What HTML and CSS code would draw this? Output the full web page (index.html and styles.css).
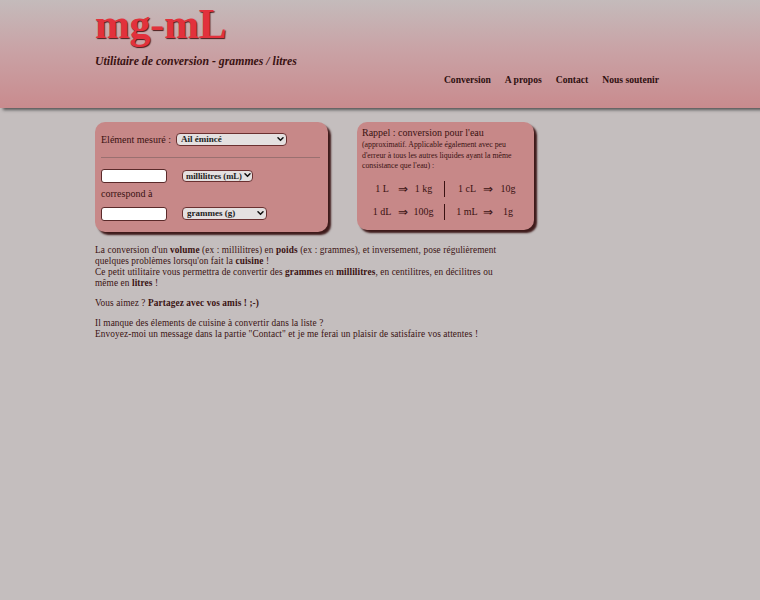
FILE: index.html
```html
<!DOCTYPE html>
<html lang="fr">
<head>
<meta charset="utf-8">
<title>mg-mL</title>
<link rel="stylesheet" href="styles.css">
</head>
<body>
<header class="header">
  <div class="header-inner">
    <h1 class="logo">mg-mL</h1>
    <div class="tagline">Utilitaire de conversion - grammes / litres</div>
    <nav class="nav">
      <a href="#">Conversion</a>
      <a href="#">A propos</a>
      <a href="#">Contact</a>
      <a href="#">Nous soutenir</a>
    </nav>
  </div>
</header>
<main class="content">
  <div class="boxes">
    <div class="box box-form">
      <div class="row-elem">
        <span class="label label-elem">Elément mesuré :</span>
        <span class="selwrap sel-elem">
          <select class="sel"><option>Ail émincé</option></select>
          <svg class="chev" viewBox="0 0 8 6" width="7" height="5"><path d="M1 1 L4 4 L7 1" fill="none" stroke="#111" stroke-width="1.8" stroke-linecap="round" stroke-linejoin="round"/></svg>
        </span>
      </div>
      <div class="rule"></div>
      <div class="row-io">
        <input class="num" type="text">
        <span class="selwrap sel-ml">
          <select class="sel"><option>millilitres (mL)</option></select>
          <svg class="chev" viewBox="0 0 8 6" width="7" height="5"><path d="M1 1 L4 4 L7 1" fill="none" stroke="#111" stroke-width="1.8" stroke-linecap="round" stroke-linejoin="round"/></svg>
        </span>
      </div>
      <div class="label corr">correspond à</div>
      <div class="row-io">
        <input class="num" type="text">
        <span class="selwrap sel-g">
          <select class="sel"><option>grammes (g)</option></select>
          <svg class="chev" viewBox="0 0 8 6" width="7" height="5"><path d="M1 1 L4 4 L7 1" fill="none" stroke="#111" stroke-width="1.8" stroke-linecap="round" stroke-linejoin="round"/></svg>
        </span>
      </div>
    </div>
    <div class="box box-info">
      <div class="info-title">Rappel : conversion pour l'eau</div>
      <div class="info-note">(approximatif. Applicable également avec peu d'erreur à tous les autres liquides ayant la même consistance que l'eau) :</div>
      <div class="eq">
        <span>1 L</span><span class="arr">&rArr;</span><span>1 kg</span><span class="div"></span><span>1 cL</span><span class="arr">&rArr;</span><span>10g</span>
        <span>1 dL</span><span class="arr">&rArr;</span><span>100g</span><span class="div"></span><span>1 mL</span><span class="arr">&rArr;</span><span>1g</span>
      </div>
    </div>
  </div>
  <div class="text">
    <p>La conversion d'un <b>volume</b> (ex : millilitres) en <b>poids</b> (ex : grammes), et inversement, pose régulièrement quelques problèmes lorsqu'on fait la <b>cuisine</b> !<br>Ce petit utilitaire vous permettra de convertir des <b>grammes</b> en <b>millilitres</b>, en centilitres, en décilitres ou même en <b>litres</b> !</p>
    <p>Vous aimez ? <b>Partagez avec vos amis ! ;-)</b></p>
    <p>Il manque des élements de cuisine à convertir dans la liste ?<br>Envoyez-moi un message dans la partie "Contact" et je me ferai un plaisir de satisfaire vos attentes !</p>
  </div>
</main>
</body>
</html>
```
FILE: styles.css
```css
html, body {
  margin: 0;
  padding: 0;
}
body {
  background: #c4bebe;
  font-family: "Liberation Serif", "Times New Roman", serif;
  color: #3a1212;
  font-size: 9.6px;
}
.header {
  height: 108px;
  background: linear-gradient(to bottom, #c4bbbb 0%, #c9a3a6 45%, #c98b8e 100%);
  box-shadow: 3px 2px 3px #555;
}
.header-inner {
  width: 570px;
  margin-left: 95px;
  display: flex;
  flex-direction: column;
}
.logo {
  margin: 0;
  padding-top: 2px;
  font-size: 41.5px;
  line-height: 44px;
  font-weight: bold;
  color: #e2313c;
  text-shadow: 1px 1px 1px #4a1a1a;
}
.tagline {
  margin-top: 8px;
  font-size: 11.8px;
  font-weight: bold;
  font-style: italic;
  color: #3a1212;
  line-height: 14px;
}
.nav {
  display: flex;
  justify-content: flex-end;
  gap: 14px;
  margin-top: 6px;
  padding-right: 6px;
}
.nav a {
  color: #2e1010;
  text-decoration: none;
  font-weight: bold;
  font-size: 9.6px;
}
.content {
  margin-left: 95px;
  width: 440px;
  padding-top: 14px;
}
.boxes {
  display: flex;
  gap: 29px;
  align-items: flex-start;
  margin-bottom: 13px;
}
.box {
  flex: none;
  background: #c78888;
  border-radius: 10px;
  box-shadow: 3px 3px 2px #3e1a1a;
}
.box-form {
  width: 233px;
  height: 110px;
  box-sizing: border-box;
  padding: 10px 7px 0 6px;
}
.label {
  font-size: 10px;
  color: #3a1212;
}
.label-elem {
  width: 75px;
  flex: none;
}
.row-elem {
  display: flex;
  align-items: center;
  height: 15px;
}
.selwrap {
  position: relative;
  display: inline-flex;
  flex: none;
}
.sel {
  appearance: none;
  -webkit-appearance: none;
  font-family: "Liberation Serif", "Times New Roman", serif;
  font-weight: bold;
  font-size: 9px;
  color: #222;
  background: #e4e0e0;
  border: 1px solid #6a3030;
  border-radius: 4px;
  height: 13px;
  width: 100%;
  box-sizing: border-box;
  padding: 0 0 0 4px;
  margin: 0;
  line-height: 11px;
}
.chev {
  position: absolute;
  right: 3px;
  top: 4px;
}
.sel-elem { width: 111px; }
.sel-ml { width: 71px; }
.sel-ml .sel { height: 12px; padding-left: 3px; font-size: 8.6px; }
.sel-ml .chev { top: 3.5px; right: 2px; }
.sel-g { width: 85px; }
.rule {
  height: 1px;
  background: #9a7070;
  margin: 10px 0 10px 0;
  width: 219px;
}
.row-io {
  display: flex;
  align-items: center;
  gap: 15px;
  height: 15px;
}
.num {
  width: 66px;
  height: 14px;
  box-sizing: border-box;
  border: 1px solid #5a2a2a;
  border-radius: 3px;
  background: #fff;
  padding: 0;
  margin: 0;
}
.corr {
  margin: 5px 0 6px 0;
  line-height: 12px;
}
.box-info {
  width: 177px;
  height: 108px;
  box-sizing: border-box;
  padding: 4px 5px 0 5px;
}
.info-title {
  font-size: 10px;
  line-height: 13px;
}
.info-note {
  font-size: 7.8px;
  line-height: 10.5px;
  margin-top: 1px;
}
.eq {
  display: grid;
  grid-template-columns: 22px 20px 21px 20px 26px 16px 24px;
  grid-auto-rows: 16px;
  row-gap: 7px;
  margin: 9px 0 0 9px;
  font-size: 10px;
  align-items: center;
}
.eq span {
  text-align: center;
  line-height: 16px;
}
.eq .arr {
  font-size: 12px;
}
.eq .div {
  justify-self: center;
  width: 1px;
  height: 16px;
  background: #3a1212;
}
.text {
  width: 404px;
}
p {
  margin: 0 0 9px 0;
  line-height: 11px;
  font-size: 9.3px;
  letter-spacing: 0.1px;
}
p b { font-weight: bold; }
```
